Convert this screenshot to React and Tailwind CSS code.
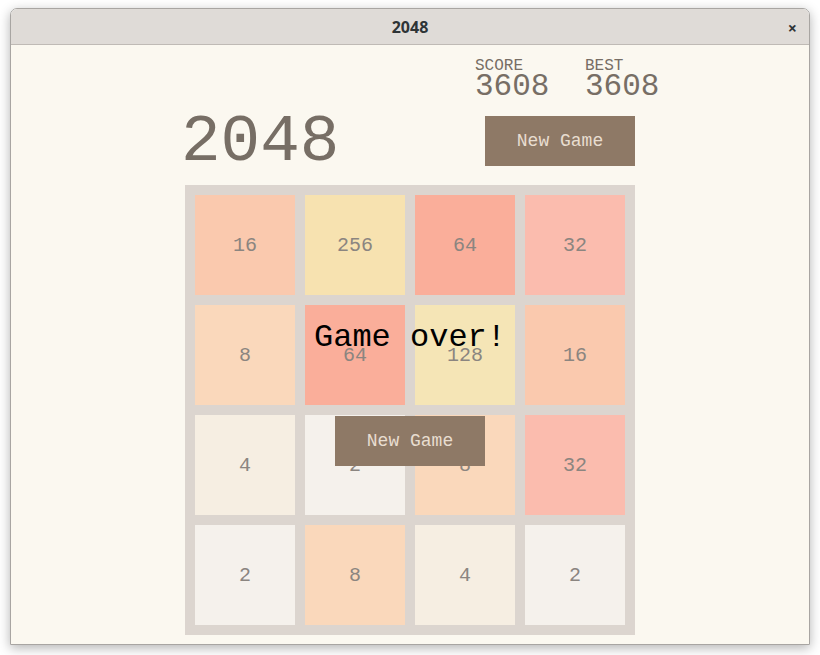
import React from 'react';

const MONO = { fontFamily: '"Liberation Mono", "DejaVu Sans Mono", monospace' };

const tiles = [
  [16, 'bg-[#fac9ae]'], [256, 'bg-[#f7e2b0]'], [64, 'bg-[#faae9a]'], [32, 'bg-[#fbbcae]'],
  [8, 'bg-[#fad8bb]'], [64, 'bg-[#faae9a]'], [128, 'bg-[#f5e5b6]'], [16, 'bg-[#fac9ae]'],
  [4, 'bg-[#f6eee2]'], [2, 'bg-[#f5f1ec]'], [8, 'bg-[#fad8bb]'], [32, 'bg-[#fbbcae]'],
  [2, 'bg-[#f5f1ec]'], [8, 'bg-[#fad8bb]'], [4, 'bg-[#f6eee2]'], [2, 'bg-[#f5f1ec]'],
];

const ScoreBox = ({ label, value }) => (
  <div className="w-[110px] shrink-0 flex flex-col text-[#776e65]">
    <span className="text-[16px] leading-none">{label}</span>
    <span className="text-[31px] leading-none -mt-[3px]">{value}</span>
  </div>
);

const App = () => {
  return (
    <div className="w-[820px] h-[655px] bg-white overflow-hidden pt-[8px] pl-[10px]">
      <div className="w-[800px] h-[637px] flex flex-col rounded-t-[7px] border border-[#a8a5a2] shadow-[0_3px_12px_rgba(0,0,0,0.3)] overflow-hidden">
        {/* title bar */}
        <div
          className="h-[36px] shrink-0 flex items-center justify-center relative bg-[#dfdbd7] border-b border-[#bfbab5]"
          style={{ fontFamily: '"Noto Sans", "DejaVu Sans", sans-serif' }}
        >
          <span className="text-[16px] font-bold text-[#2e3436]">2048</span>
          <span className="absolute right-[12px] top-[7px] text-[16px] font-bold text-[#2e3436]">×</span>
        </div>

        {/* content */}
        <div className="flex-1 bg-[#fbf8f0] flex flex-col items-center" style={MONO}>
          <div className="w-[450px] pt-[13px]">
            <div className="flex pl-[290px]">
              <ScoreBox label="SCORE" value="3608" />
              <ScoreBox label="BEST" value="3608" />
            </div>

            <div className="flex justify-between items-start mt-[8px]">
              <h1 className="text-[66px] leading-none text-[#776e65] -ml-[4px]">2048</h1>
              <button className="w-[150px] h-[50px] mt-[6px] bg-[#8e7966] text-[#e8ddd0] text-[18px]">
                New Game
              </button>
            </div>

            <div className="relative mt-[9px] bg-[#dcd5cf] p-[10px] grid grid-cols-4 gap-[10px]">
              {tiles.map(([n, bg], i) => (
                <div key={i} className={`h-[100px] pt-[2px] flex items-center justify-center text-[20px] text-[#8b8580] ${bg}`}>
                  {n}
                </div>
              ))}

              <div className="absolute inset-0 flex flex-col items-center pt-[137px]">
                <span className="text-[32px] leading-none text-black">Game over!</span>
                <button className="mt-[62px] w-[150px] h-[50px] bg-[#8e7966] text-[#e8ddd0] text-[18px]">
                  New Game
                </button>
              </div>
            </div>
          </div>
        </div>
      </div>
    </div>
  );
};

export default App;
